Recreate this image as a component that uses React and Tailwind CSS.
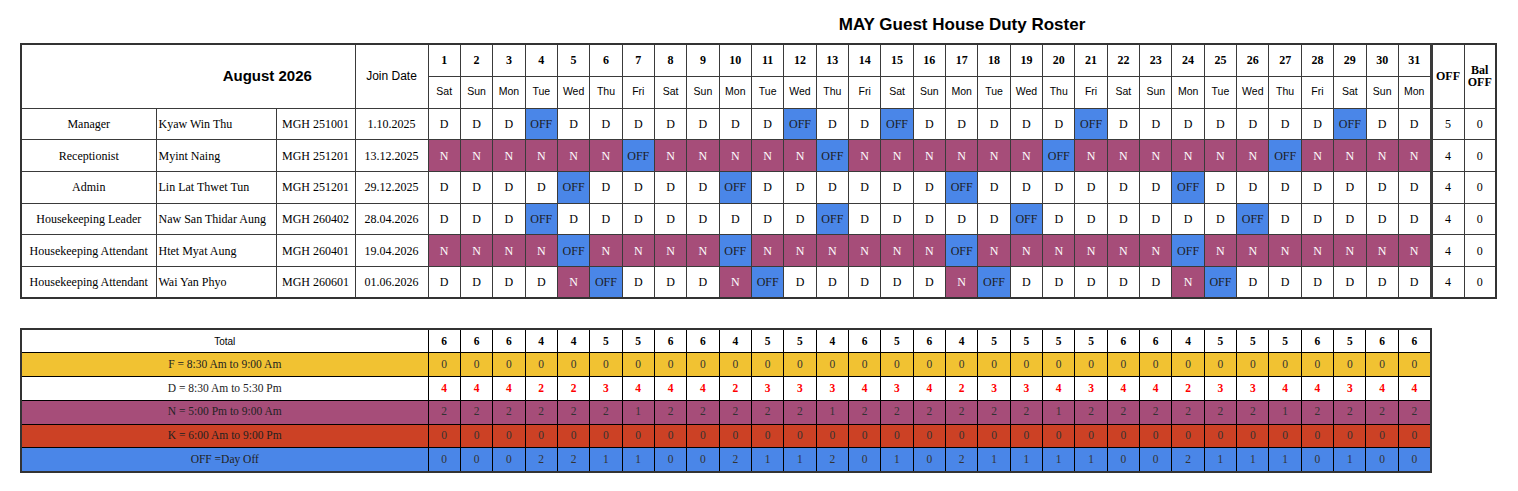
import React from "react";

const DAYS = ["Sat", "Sun", "Mon", "Tue", "Wed", "Thu", "Fri"];
const dayName = (i) => DAYS[i % 7];

function build(base, offs, ns = []) {
  return Array.from({ length: 31 }, (_, i) => {
    const d = i + 1;
    if (offs.includes(d)) return "OFF";
    if (ns.includes(d)) return "N";
    return base;
  });
}

const staff = [
  { role: "Manager", name: "Kyaw Win Thu", id: "MGH 251001", join: "1.10.2025", shifts: build("D", [4, 12, 15, 21, 29]), off: 5, bal: 0 },
  { role: "Receptionist", name: "Myint Naing", id: "MGH 251201", join: "13.12.2025", shifts: build("N", [7, 13, 20, 27]), off: 4, bal: 0 },
  { role: "Admin", name: "Lin Lat Thwet Tun", id: "MGH 251201", join: "29.12.2025", shifts: build("D", [5, 10, 17, 24]), off: 4, bal: 0 },
  { role: "Housekeeping Leader", name: "Naw San Thidar Aung", id: "MGH 260402", join: "28.04.2026", shifts: build("D", [4, 13, 19, 26]), off: 4, bal: 0 },
  { role: "Housekeeping Attendant", name: "Htet Myat Aung", id: "MGH 260401", join: "19.04.2026", shifts: build("N", [5, 10, 17, 24]), off: 4, bal: 0 },
  { role: "Housekeeping Attendant", name: "Wai Yan Phyo", id: "MGH 260601", join: "01.06.2026", shifts: build("D", [6, 11, 18, 25], [5, 10, 17, 24]), off: 4, bal: 0 },
];

const totals = "6 6 6 4 4 5 5 6 6 4 5 5 4 6 5 6 4 5 5 5 5 6 6 4 5 5 5 6 5 6 6".split(" ");
const fRow = Array(31).fill("0");
const dRow = "4 4 4 2 2 3 4 4 4 2 3 3 3 4 3 4 2 3 3 4 3 4 4 2 3 3 4 4 3 4 4".split(" ");
const nRow = "2 2 2 2 2 2 1 2 2 2 2 2 1 2 2 2 2 2 2 1 2 2 2 2 2 2 1 2 2 2 2".split(" ");
const kRow = Array(31).fill("0");
const offRow = "0 0 0 2 2 1 1 0 0 2 1 1 2 0 1 0 2 1 1 1 1 0 0 2 1 1 1 0 1 0 0".split(" ");

function ShiftCell({ v }) {
  if (v === "OFF")
    return <td className="border border-[#3a3a3a] bg-[#4a86e8] text-[#1c1c1c] text-center">OFF</td>;
  if (v === "N")
    return <td className="border border-[#3a3a3a] bg-[#a64d79] text-white text-center">N</td>;
  return <td className="border border-[#3a3a3a] bg-white text-black text-center">{v}</td>;
}

const legend = [
  { label: "F = 8:30 Am to 9:00 Am", bg: "bg-[#f1c232]", vals: fRow, num: "text-[#333]" },
  { label: "D = 8:30 Am to 5:30 Pm", bg: "bg-white", vals: dRow, num: "text-[#ff0000] font-bold" },
  { label: "N = 5:00 Pm to 9:00 Am", bg: "bg-[#a64d79]", vals: nRow, num: "text-[#333]" },
  { label: "K = 6:00 Am to 9:00 Pm", bg: "bg-[#cc4125]", vals: kRow, num: "text-[#333]" },
  { label: "OFF =Day Off", bg: "bg-[#4a86e8]", vals: offRow, num: "text-[#333]" },
];

export default function App() {
  const days = Array.from({ length: 31 }, (_, i) => i);
  return (
    <div className="w-[1518px] h-[491px] bg-white font-['Liberation_Serif',serif] text-[12px] text-black">
      <div className="flex pt-[15px] h-[34px]">
        <div className="w-[427px] shrink-0" />
        <div className="w-[1070px] text-center font-['Liberation_Sans',sans-serif] font-bold text-[17px] leading-[20px]">
          MAY Guest House Duty Roster
        </div>
      </div>

      <div className="pl-[20px] pt-[9px]">
        <table className="table-fixed border-collapse w-[1477px] border-2 border-[#333]">
          <colgroup>
            <col className="w-[135px]" />
            <col className="w-[120px]" />
            <col className="w-[79px]" />
            <col className="w-[73px]" />
            {days.map((i) => (
              <col key={i} />
            ))}
            <col className="w-[33px]" />
            <col className="w-[32px]" />
          </colgroup>
          <thead>
            <tr className="h-[32px]">
              <th
                colSpan={3}
                rowSpan={2}
                className="border border-[#3a3a3a] font-['Liberation_Sans',sans-serif] text-[15px] font-bold pl-[158px]"
              >
                August 2026
              </th>
              <th
                rowSpan={2}
                className="border border-[#3a3a3a] font-['Liberation_Sans',sans-serif] text-[12px] font-normal"
              >
                Join Date
              </th>
              {days.map((i) => (
                <th key={i} className="border border-[#3a3a3a] font-bold text-[12px]">
                  {i + 1}
                </th>
              ))}
              <th rowSpan={2} className="border border-[#3a3a3a] border-l-[3px] border-l-double font-bold text-[12px]">
                OFF
              </th>
              <th rowSpan={2} className="border border-[#3a3a3a] font-bold text-[12px] leading-[12px]">
                Bal
                <br />
                OFF
              </th>
            </tr>
            <tr className="h-[32px]">
              {days.map((i) => (
                <th
                  key={i}
                  className="border border-[#3a3a3a] font-['Liberation_Sans',sans-serif] font-normal text-[10.5px]"
                >
                  {dayName(i)}
                </th>
              ))}
            </tr>
          </thead>
          <tbody>
            {staff.map((s, r) => (
              <tr key={r} className="h-[31.7px]">
                <td className="border border-[#3a3a3a] text-center">{s.role}</td>
                <td className="border border-[#3a3a3a] pl-[2px]">{s.name}</td>
                <td className="border border-[#3a3a3a] text-center">{s.id}</td>
                <td className="border border-[#3a3a3a] text-center">{s.join}</td>
                {s.shifts.map((v, i) => (
                  <ShiftCell key={i} v={v} />
                ))}
                <td className="border border-[#3a3a3a] border-l-[3px] border-l-double text-center">{s.off}</td>
                <td className="border border-[#3a3a3a] text-center">{s.bal}</td>
              </tr>
            ))}
          </tbody>
        </table>
      </div>

      <div className="pl-[20px] pt-[29px]">
        <table className="table-fixed border-collapse w-[1412px] border-2 border-[#333] text-[11.5px]">
          <colgroup>
            <col className="w-[407px]" />
            {days.map((i) => (
              <col key={i} />
            ))}
          </colgroup>
          <tbody>
            <tr className="h-[23.5px] bg-white">
              <td className="border border-black text-center font-['Liberation_Sans',sans-serif] text-[10px]">Total</td>
              {totals.map((v, i) => (
                <td key={i} className="border border-black text-center font-bold">
                  {v}
                </td>
              ))}
            </tr>
            {legend.map((row, r) => (
              <tr key={r} className={`h-[23.8px] ${row.bg}`}>
                <td className="border border-black text-center text-[#222]">{row.label}</td>
                {row.vals.map((v, i) => (
                  <td key={i} className={`border border-black text-center ${row.num}`}>
                    {v}
                  </td>
                ))}
              </tr>
            ))}
          </tbody>
        </table>
      </div>
    </div>
  );
}
